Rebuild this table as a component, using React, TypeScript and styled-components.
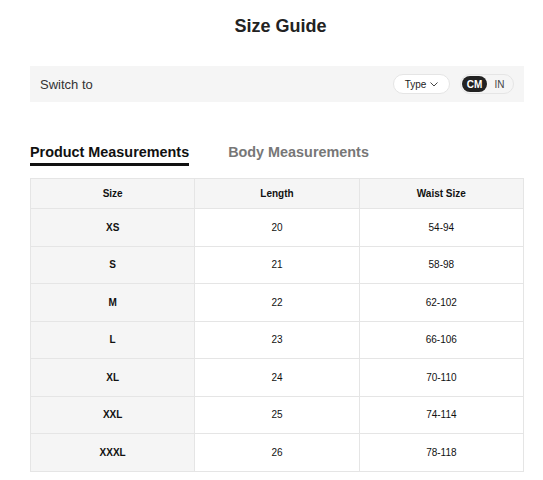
import React from "react";
import styled, { createGlobalStyle } from "styled-components";

const Global = createGlobalStyle`
  html, body { margin: 0; padding: 0; background: #fff; }
  body { font-family: "Liberation Sans", Arial, sans-serif; color: #222; }
`;

const Page = styled.div`
  width: 494px;
  margin-left: 30px;
  padding-top: 14px;
`;

const Title = styled.h1`
  margin: 0;
  padding-left: 7px;
  text-align: center;
  font-size: 18px;
  font-weight: 700;
  line-height: 24px;
  color: #222;
`;

const SwitchBar = styled.div`
  margin-top: 28px;
  height: 36px;
  background: #f5f5f5;
  display: flex;
  align-items: center;
  padding: 0 10px;
  box-sizing: border-box;
`;

const SwitchLabel = styled.span`
  font-size: 13px;
  color: #333;
  flex: 1;
`;

const TypePill = styled.button`
  height: 20px;
  width: 57px;
  border-radius: 10px;
  border: 1px solid #e5e5e5;
  background: #fff;
  font-family: inherit;
  font-size: 10px;
  color: #222;
  display: flex;
  align-items: center;
  justify-content: center;
  gap: 4px;
  padding: 0;
  margin-right: 10px;
`;

const UnitToggle = styled.div`
  height: 20px;
  width: 54px;
  border-radius: 10px;
  border: 1px solid #e5e5e5;
  background: #f5f5f5;
  box-sizing: border-box;
  display: flex;
  align-items: center;
  padding: 1px;
`;

const UnitOption = styled.span<{ $active?: boolean }>`
  height: 16px;
  width: 25px;
  border-radius: 8px;
  display: flex;
  align-items: center;
  justify-content: center;
  font-size: 10px;
  background: ${(p) => (p.$active ? "#222" : "transparent")};
  color: ${(p) => (p.$active ? "#fff" : "#444")};
  font-weight: ${(p) => (p.$active ? 700 : 400)};
`;

const Tabs = styled.div`
  margin-top: 41px;
  display: flex;
  gap: 39px;
`;

const Tab = styled.div<{ $active?: boolean }>`
  font-size: 14.4px;
  font-weight: 700;
  line-height: 18px;
  padding-bottom: 2px;
  color: ${(p) => (p.$active ? "#111" : "#777")};
  border-bottom: 3px solid ${(p) => (p.$active ? "#111" : "transparent")};
`;

const Table = styled.table`
  margin-top: 12px;
  width: 494px;
  border-collapse: collapse;
  table-layout: fixed;
  font-size: 10px;
`;

const Th = styled.th`
  height: 29px;
  background: #f5f5f5;
  border: 1px solid #e5e5e5;
  font-weight: 700;
  color: #111;
  padding: 0;
`;

const Td = styled.td<{ $head?: boolean }>`
  height: 36.5px;
  border: 1px solid #e5e5e5;
  text-align: center;
  padding: 0;
  background: ${(p) => (p.$head ? "#f5f5f5" : "#fff")};
  font-weight: ${(p) => (p.$head ? 700 : 400)};
  color: #111;
`;

const rows = [
  ["XS", "20", "54-94"],
  ["S", "21", "58-98"],
  ["M", "22", "62-102"],
  ["L", "23", "66-106"],
  ["XL", "24", "70-110"],
  ["XXL", "25", "74-114"],
  ["XXXL", "26", "78-118"],
];

export default function App() {
  return (
    <>
      <Global />
      <Page>
        <Title>Size Guide</Title>
        <SwitchBar>
          <SwitchLabel>Switch to</SwitchLabel>
          <TypePill>
            Type
            <svg width="8" height="5" viewBox="0 0 8 5" fill="none">
              <path d="M0.5 0.5L4 4L7.5 0.5" stroke="#444" strokeWidth="1" />
            </svg>
          </TypePill>
          <UnitToggle>
            <UnitOption $active>CM</UnitOption>
            <UnitOption>IN</UnitOption>
          </UnitToggle>
        </SwitchBar>
        <Tabs>
          <Tab $active>Product Measurements</Tab>
          <Tab>Body Measurements</Tab>
        </Tabs>
        <Table>
          <thead>
            <tr>
              <Th>Size</Th>
              <Th>Length</Th>
              <Th>Waist Size</Th>
            </tr>
          </thead>
          <tbody>
            {rows.map((r) => (
              <tr key={r[0]}>
                <Td $head>{r[0]}</Td>
                <Td>{r[1]}</Td>
                <Td>{r[2]}</Td>
              </tr>
            ))}
          </tbody>
        </Table>
      </Page>
    </>
  );
}
